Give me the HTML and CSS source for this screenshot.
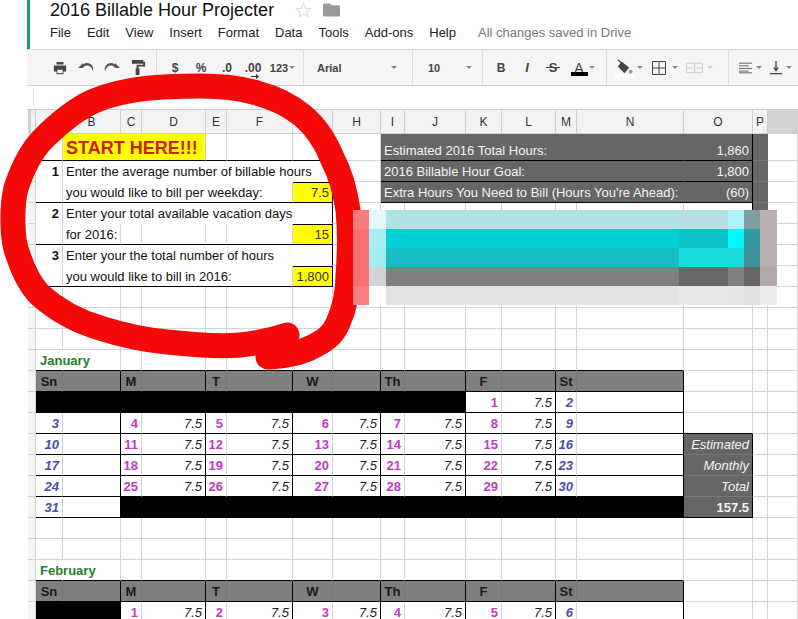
FILE: index.html
```html
<!DOCTYPE html>
<html lang="en">
<head>
<meta charset="utf-8">
<title>2016 Billable Hour Projecter</title>
<link rel="stylesheet" href="styles.css">
</head>
<body>
<div class="page">
  <header class="docbar">
    <div class="titlerow">
      <h1 class="doctitle">2016 Billable Hour Projecter</h1>
      <svg class="star" viewBox="0 0 18 18"><path d="M9 1.500l2.200 5 5.300.5-4 3.600 1.200 5.300L9 13.100 4.300 15.900l1.200-5.300-4-3.600 5.300-.5z" fill="none" stroke="#ddd" stroke-width="1.200"/></svg>
      <svg class="folder" viewBox="0 0 18 14"><path d="M0 1.500C0 .7.700 0 1.500 0H7l2 2h7.500c.8 0 1.500.7 1.500 1.500v9c0 .8-.7 1.500-1.500 1.500h-15C.7 14 0 13.300 0 12.500z" fill="#999"/></svg>
    </div>
    <nav class="menu">
      <span>File</span><span>Edit</span><span>View</span><span>Insert</span><span>Format</span><span>Data</span><span>Tools</span><span>Add-ons</span><span>Help</span><span class="saved">All changes saved in Drive</span>
    </nav>
  </header>

  <div class="toolbar">
    <div class="tgroup g1">
      <span class="tb"><svg viewBox="0 0 16 16" class="ic"><path d="M4 1h8v3H4zM1 5h14v7h-3v3H4v-3H1zM5 10v4h6v-4z" fill="#444" fill-rule="evenodd"/></svg></span>
      <span class="tb"><svg viewBox="0 0 16 12" class="ic wide"><path d="M5 1L0 6h5c0-1 2-2.500 4-2.500 2.500 0 4.500 1.500 6 5.500 1-4-1.500-8-6-8-1.500 0-3 .5-4 1.500z" fill="#555"/></svg></span>
      <span class="tb"><svg viewBox="0 0 16 12" class="ic wide"><path d="M11 1l5 5h-5c0-1-2-2.500-4-2.500C4.500 3.500 2.500 5 1 9 0 5 2.500 1 7 1c1.500 0 3 .5 4 1.500z" fill="#555"/></svg></span>
      <span class="tb"><svg viewBox="0 0 16 18" class="ic big"><path d="M1 1h12v4H1zM13 3h2v5H8v2H9v7H5v-7h1V6h7z" fill="#444"/></svg></span>
    </div>
    <div class="tgroup g2">
      <span class="tb">$</span><span class="tb">%</span>
      <span class="tb">.0<svg class="arrow" viewBox="0 0 8 5"><path d="M8 2H3V0L0 2.500 3 5V3h5z" fill="#333"/></svg></span>
      <span class="tb">.00<svg class="arrow" viewBox="0 0 8 5"><path d="M0 2H5V0L8 2.500 5 5V3H0z" fill="#333"/></svg></span>
      <span class="tb num">123</span><i class="caret"></i>
    </div>
    <div class="tgroup g3"><span class="tlabel">Arial</span><i class="caret"></i></div>
    <div class="tgroup g4"><span class="tlabel">10</span><i class="caret"></i></div>
    <div class="tgroup g5">
      <span class="tb">B</span><span class="tb it">I</span>
      <span class="tb strike">S</span>
      <span class="tb colora">A</span><i class="caret"></i>
    </div>
    <div class="tgroup g6">
      <span class="tb"><svg viewBox="0 0 18 18" class="ic big"><path d="M6 3l8 6-5 6-7-7z" fill="#444"/><path d="M2 1l6 5" stroke="#444" stroke-width="1.400" fill="none"/><circle cx="15.500" cy="13.500" r="2" fill="#999"/></svg><b class="fillbar"></b></span><i class="caret"></i>
      <span class="tb"><svg viewBox="0 0 14 14" class="ic"><path d="M.5.500h13v13H.5zM7 .5v13M.5 7h13" fill="none" stroke="#444"/></svg></span><i class="caret"></i>
      <span class="tb"><svg viewBox="0 0 18 14" class="ic big"><path d="M.5 2.500h17v10H.5zM9 2.500v10M.5 7.500H7M11 7.500h6.500" fill="none" stroke="#ccc"/></svg></span><i class="caret pale"></i>
    </div>
    <div class="tgroup g7">
      <span class="tb"><svg viewBox="0 0 16 12" class="ic"><path d="M0 .5h15M0 3.500h11M0 6.500h15M0 9.500h11M0 11.500h15" fill="none" stroke="#555"/></svg></span><i class="caret"></i>
      <span class="tb"><svg viewBox="0 0 16 16" class="ic"><path d="M8 0v10M5.500 7.500L8 11l2.500-3.500M1 14.500h14" fill="none" stroke="#444" stroke-width="1.500"/></svg></span><i class="caret"></i>
    </div>
  </div>

  <div class="formula"><i class="fxline"></i></div>

  <table class="sheet">
    <colgroup>
      <col class="c-rh"><col class="c-a"><col class="c-b"><col class="c-c"><col class="c-d"><col class="c-e"><col class="c-f"><col class="c-g"><col class="c-h"><col class="c-i"><col class="c-j"><col class="c-k"><col class="c-l"><col class="c-m"><col class="c-n"><col class="c-o"><col class="c-p"><col class="c-q">
    </colgroup>
    <thead>
      <tr class="heads"><th class="rh handle"></th><th>A</th><th>B</th><th>C</th><th>D</th><th>E</th><th>F</th><th>G</th><th>H</th><th>I</th><th>J</th><th>K</th><th>L</th><th>M</th><th>N</th><th>O</th><th>P</th><th class="qhead"></th></tr>
    </thead>
    <tbody>
      <tr class="tall"><th class="rh"></th><td class="bb"></td><td colspan="3" class="start bb">START HERE!!!</td><td class="bb"></td><td class="bb"></td><td class="bb"></td><td></td><td colspan="6" class="dk bb text">Estimated 2016 Total Hours:</td><td class="dk bb br num">1,860</td><td class="dk"></td><td></td></tr>
      <tr><th class="rh"></th><td class="step nob">1</td><td colspan="6" class="text nob">Enter the average number of billable hours</td><td class="bl"></td><td colspan="6" class="dk bb text">2016 Billable Hour Goal:</td><td class="dk bb br num">1,800</td><td class="dk"></td><td></td></tr>
      <tr><th class="rh"></th><td class="bb"></td><td colspan="5" class="text bb">you would like to bill per weekday:</td><td class="yel bb br num">7.5</td><td></td><td colspan="6" class="dk bb text">Extra Hours You Need to Bill (Hours You're Ahead):</td><td class="dk bb br num">(60)</td><td class="dk"></td><td></td></tr>
      <tr><th class="rh"></th><td class="step nob">2</td><td colspan="6" class="text nob br">Enter your total available vacation days</td><td></td><td></td><td></td><td></td><td></td><td></td><td></td><td class="br"></td><td class="dk"></td><td></td></tr>
      <tr><th class="rh"></th><td class="bb"></td><td class="text bb">for 2016:</td><td class="bb"></td><td class="bb"></td><td class="bb"></td><td class="bb"></td><td class="yel bb br num">15</td><td></td><td></td><td></td><td></td><td></td><td></td><td></td><td></td><td></td><td></td></tr>
      <tr><th class="rh"></th><td class="step nob">3</td><td colspan="6" class="text nob br">Enter your the total number of hours</td><td></td><td></td><td></td><td></td><td></td><td></td><td></td><td></td><td></td><td></td></tr>
      <tr><th class="rh"></th><td class="bb"></td><td colspan="5" class="text bb">you would like to bill in 2016:</td><td class="yel bb br num">1,800</td><td></td><td></td><td></td><td></td><td></td><td></td><td></td><td></td><td></td><td></td></tr>
      <tr><th class="rh"></th><td></td><td></td><td></td><td></td><td></td><td></td><td></td><td></td><td></td><td></td><td></td><td></td><td></td><td></td><td></td><td></td><td></td></tr>
      <tr><th class="rh"></th><td></td><td></td><td></td><td></td><td></td><td></td><td></td><td></td><td></td><td></td><td></td><td></td><td></td><td></td><td></td><td></td><td></td></tr>
      <tr><th class="rh"></th><td></td><td></td><td></td><td></td><td></td><td></td><td></td><td></td><td></td><td></td><td></td><td></td><td></td><td></td><td></td><td></td><td></td></tr>

      <tr class="top"><th class="rh"></th><td class="month">January</td><td></td><td></td><td></td><td></td><td></td><td></td><td></td><td></td><td></td><td></td><td></td><td></td><td></td><td></td><td></td><td></td></tr>
      <tr class="cal calh"><th class="rh"></th><td>Sn</td><td></td><td>M</td><td></td><td>T</td><td></td><td>W</td><td></td><td>Th</td><td></td><td>F</td><td></td><td>St</td><td></td><td></td><td></td><td></td></tr>
      <tr class="cal"><th class="rh"></th><td class="k"></td><td class="k"></td><td class="k"></td><td class="k"></td><td class="k"></td><td class="k"></td><td class="k"></td><td class="k"></td><td class="k"></td><td class="k"></td><td class="wd">1</td><td class="hr">7.5</td><td class="we">2</td><td></td><td></td><td></td><td></td></tr>
      <tr class="cal topo"><th class="rh"></th><td class="we">3</td><td></td><td class="wd">4</td><td class="hr">7.5</td><td class="wd">5</td><td class="hr">7.5</td><td class="wd">6</td><td class="hr">7.5</td><td class="wd">7</td><td class="hr">7.5</td><td class="wd">8</td><td class="hr">7.5</td><td class="we">9</td><td></td><td class="dkb bbk"></td><td></td><td></td></tr>
      <tr class="cal"><th class="rh"></th><td class="we">10</td><td></td><td class="wd">11</td><td class="hr">7.5</td><td class="wd">12</td><td class="hr">7.5</td><td class="wd">13</td><td class="hr">7.5</td><td class="wd">14</td><td class="hr">7.5</td><td class="wd">15</td><td class="hr">7.5</td><td class="we">16</td><td></td><td class="dk sum">Estimated</td><td></td><td></td></tr>
      <tr class="cal"><th class="rh"></th><td class="we">17</td><td></td><td class="wd">18</td><td class="hr">7.5</td><td class="wd">19</td><td class="hr">7.5</td><td class="wd">20</td><td class="hr">7.5</td><td class="wd">21</td><td class="hr">7.5</td><td class="wd">22</td><td class="hr">7.5</td><td class="we">23</td><td></td><td class="dk sum">Monthly</td><td></td><td></td></tr>
      <tr class="cal"><th class="rh"></th><td class="we">24</td><td></td><td class="wd">25</td><td class="hr">7.5</td><td class="wd">26</td><td class="hr">7.5</td><td class="wd">27</td><td class="hr">7.5</td><td class="wd">28</td><td class="hr">7.5</td><td class="wd">29</td><td class="hr">7.5</td><td class="we">30</td><td></td><td class="dk sum">Total</td><td></td><td></td></tr>
      <tr class="cal"><th class="rh"></th><td class="we">31</td><td></td><td class="k"></td><td class="k"></td><td class="k"></td><td class="k"></td><td class="k"></td><td class="k"></td><td class="k"></td><td class="k"></td><td class="k"></td><td class="k"></td><td class="k"></td><td class="k"></td><td class="dk total">157.5</td><td></td><td></td></tr>
      <tr><th class="rh"></th><td></td><td></td><td></td><td></td><td></td><td></td><td></td><td></td><td></td><td></td><td></td><td></td><td></td><td></td><td></td><td></td><td></td></tr>
      <tr><th class="rh"></th><td></td><td></td><td></td><td></td><td></td><td></td><td></td><td></td><td></td><td></td><td></td><td></td><td></td><td></td><td></td><td></td><td></td></tr>

      <tr class="top"><th class="rh"></th><td class="month">February</td><td></td><td></td><td></td><td></td><td></td><td></td><td></td><td></td><td></td><td></td><td></td><td></td><td></td><td></td><td></td><td></td></tr>
      <tr class="cal calh"><th class="rh"></th><td>Sn</td><td></td><td>M</td><td></td><td>T</td><td></td><td>W</td><td></td><td>Th</td><td></td><td>F</td><td></td><td>St</td><td></td><td></td><td></td><td></td></tr>
      <tr class="cal"><th class="rh"></th><td class="k"></td><td class="k"></td><td class="wd">1</td><td class="hr">7.5</td><td class="wd">2</td><td class="hr">7.5</td><td class="wd">3</td><td class="hr">7.5</td><td class="wd">4</td><td class="hr">7.5</td><td class="wd">5</td><td class="hr">7.5</td><td class="we">6</td><td></td><td></td><td></td><td></td></tr>
    </tbody>
  </table>

  <svg class="scribble" viewBox="0 0 798 619">
    <path d="M268 357C285 356 300 353 310 348C325 341 333 335 338 323C346 305 348 290 348 275C350 250 350 230 348 210C345 190 341 175 333 160C325 140 315 126 303 116C290 105 272 97 257 93C240 88 220 86 200 86C162 86 124 88 94 101C78 108 60 122 43 139C32 150 22 170 16 188C12 205 11 238 18 255C23 270 30 285 40 295C60 313 80 322 100 328C125 336 145 340 167 342C195 345 218 347 240 345C260 343 275 339 287 335" fill="none" stroke="#f40808" stroke-width="25" stroke-linecap="round" stroke-linejoin="round"/>
  </svg>

  <div class="mosaic">
    <div class="mrow r1"><i class="m0"></i><i class="m1"></i><i class="m2"></i><i class="m3"></i><i class="m4"></i><i class="m5"></i><i class="m6"></i></div>
    <div class="mrow r2"><i class="m0"></i><i class="m1"></i><i class="m2"></i><i class="m3"></i><i class="m4"></i><i class="m5"></i><i class="m6"></i></div>
    <div class="mrow r3"><i class="m0"></i><i class="m1"></i><i class="m2"></i><i class="m3"></i><i class="m4"></i><i class="m5"></i><i class="m6"></i></div>
    <div class="mrow r4"><i class="m0"></i><i class="m1"></i><i class="m2"></i><i class="m3"></i><i class="m4"></i><i class="m5"></i><i class="m6"></i></div>
    <div class="mrow r5"><i class="m0"></i><i class="m1"></i><i class="m2"></i><i class="m3"></i><i class="m4"></i><i class="m5"></i><i class="m6"></i></div>
  </div>
</div>
</body>
</html>
```

FILE: styles.css
```css
* { box-sizing: border-box; }
html, body { margin: 0; padding: 0; background: #fff; }
body { font-family: "Liberation Sans", Arial, sans-serif; color: #111; }
.page { position: relative; width: 798px; height: 619px; overflow: hidden; }

.docbar { margin-left: 27px; height: 49px; border-left: 3px solid #1d9d76; padding-left: 20px; }
.titlerow { display: flex; align-items: center; height: 20px; }
.doctitle { margin: 0; font-size: 18px; font-weight: 400; line-height: 20px; color: #111; white-space: nowrap; }
.star { width: 17px; height: 17px; margin-left: 21px; }
.folder { width: 17px; height: 14px; margin-left: 11px; }
.menu { display: flex; gap: 16px; font-size: 13px; line-height: 16px; margin-top: 5px; color: #222; white-space: nowrap; }
.saved { color: #777; margin-left: 6px; }

.toolbar { display: flex; margin-left: 27px; height: 37px; background: #f5f5f5; border-top: 1px solid #dcdcdc; border-bottom: 1px solid #d4d4d4; font-size: 12px; font-weight: 700; color: #444; overflow: hidden; }
.tgroup { display: flex; align-items: center; height: 100%; border-right: 1px solid #dcdcdc; flex: none; }
.g1 { width: 130px; padding-left: 20px; }
.g2 { width: 147px; padding-left: 5px; }
.g3 { width: 109px; padding-left: 13px; justify-content: space-between; padding-right: 14px; }
.g4 { width: 70px; padding-left: 15px; justify-content: space-between; padding-right: 9px; }
.g5 { width: 124px; padding-left: 5px; }
.g6 { width: 122px; padding-left: 4px; }
.g7 { width: 90px; padding-left: 4px; border-right: 0; }
.tb { position: relative; display: flex; align-items: center; justify-content: center; width: 26px; height: 100%; flex: none; font-size: 12px; }
.tlabel { font-size: 11px; }
.ic { width: 14px; height: 14px; }
.ic.wide { width: 16px; height: 12px; }
.ic.big { width: 17px; height: 17px; }
.arrow { position: absolute; left: 11px; top: 24px; width: 8px; height: 5px; }
.num { font-size: 11px; }
.it { font-style: italic; font-size: 13px; }
.strike { font-size: 13px; }
.strike::after { content: ""; position: absolute; left: 6px; right: 6px; top: 17px; height: 1px; background: #444; }
.colora { font-weight: 400; font-size: 14px; }
.colora::after { content: ""; position: absolute; left: 5px; right: 4px; bottom: 9px; height: 4px; background: #000; }
.fillbar { position: absolute; left: 4px; right: 3px; bottom: 7px; height: 4px; background: #fff; }
.caret { display: block; flex: none; width: 0; height: 0; border-left: 3px solid transparent; border-right: 3px solid transparent; border-top: 3px solid #888; margin-left: -3px; margin-right: 1px; }
.caret.pale { border-top-color: #ccc; }
.g6 .caret { margin-left: 0; margin-right: 3px; }

.formula { margin-left: 27px; height: 24px; background: #fff; border-bottom: 1px solid #ccc; padding: 2px 0 0 6px; }
.fxline { display: block; width: 1px; height: 17px; background: #ddd; }

.sheet { margin-left: 28px; table-layout: fixed; width: 770px; border-collapse: separate; border-spacing: 0; font-size: 13px; line-height: 14px; }
.c-rh { width: 8px; } .c-a { width: 27px; } .c-b { width: 58px; } .c-c { width: 21px; } .c-d { width: 64px; } .c-e { width: 21px; } .c-f { width: 66px; } .c-g { width: 40px; } .c-h { width: 48px; } .c-i { width: 24px; } .c-j { width: 61px; } .c-k { width: 36px; } .c-l { width: 54px; } .c-m { width: 21px; } .c-n { width: 107px; } .c-o { width: 69px; } .c-p { width: 15px; } .c-q { width: 30px; }
.sheet tr { height: 21px; }
.sheet tr.tall { height: 27px; }
.sheet td, .sheet th { padding: 0; border-right: 1px solid #d4d4d4; border-bottom: 1px solid #d4d4d4; white-space: nowrap; overflow: visible; }
.sheet td { vertical-align: bottom; padding-bottom: 2px; height: 21px; }
.heads { height: 24px; }
.sheet .heads th { height: 24px; background: #f3f3f3; font-weight: 400; font-size: 12px; color: #333; border-color: #d0d0d0; }
.sheet .heads .qhead { background: #d2d2d2; border-right: 0; }
.sheet .rh { background: #f5f5f5; width: 8px; }
.sheet .handle { background: #bbb; border-left: 3px solid #f3f3f3; border-bottom-color: #bbb; }

.sheet .bb { border-bottom-color: #000; }
.sheet .br { border-right-color: #000; }
.sheet .nob { border-bottom-color: #fff; }
.sheet .text { padding-left: 3px; }
.sheet .num { text-align: right; padding-right: 3px; font-size: 13px; }
.sheet .step { font-weight: 700; text-align: right; padding-right: 3px; }
.sheet .start { background: #ffff00; color: #cc1f0d; font-weight: 700; font-size: 18px; padding-left: 3px; padding-bottom: 5px; }
.sheet .yel { background: #ffff00; border-top: 1px solid #000; color: #333; }
.sheet .dk { background: #666; color: #f4f4f4; border-right-color: #666; border-bottom-color: #777; }
.sheet .dk.bb { border-bottom-color: #000; }
.sheet .dk.br { border-right-color: #000; }

.month { color: #1e7f2a; font-weight: 700; }
.sheet .month { border-right-color: #fff; padding-left: 4px; }
.sheet tr.top > td:nth-child(-n+15) { border-bottom-color: #000; }
.sheet tr.cal > td:nth-child(-n+15) { border-bottom-color: #000; }
.sheet tr.cal > td:nth-child(odd):nth-child(-n+15) { border-right-color: #000; }
.sheet tr.calh > td:nth-child(-n+15) { background: #7f7f7f; font-weight: 700; text-align: center; color: #1a1a1a; }
.sheet tr.calh > td:nth-child(even):nth-child(-n+15) { border-right-color: #777; }
.sheet tr.cal > td.k { background: #000; border-color: #000; }
.sheet tr.cal > td.we { color: #4c4cb0; font-weight: 700; font-style: italic; text-align: right; padding-right: 3px; }
.sheet tr.cal > td.wd { color: #c637c6; font-weight: 700; text-align: right; padding-right: 3px; }
.sheet tr.cal > td.hr { font-style: italic; text-align: right; padding-right: 3px; color: #222; }
.sheet tr.topo > td.dkb { border-bottom-color: #000; }
.sheet tr.cal > td.sum { font-style: italic; text-align: right; padding-right: 3px; border-right-color: #000; }
.sheet tr.cal > td.total { font-weight: 700; text-align: right; padding-right: 3px; border-right-color: #000; border-bottom-color: #000; }

.scribble { position: absolute; left: 0; top: 0; width: 798px; height: 619px; pointer-events: none; }

.mosaic { position: absolute; left: 353px; top: 210px; width: 424px; display: flex; flex-direction: column; }
.mrow { display: flex; height: 19px; }
.mrow i { display: block; flex: none; }
.m0 { width: 16px; } .m1 { width: 17px; } .m2 { width: 293px; } .m3 { width: 49px; } .m4 { width: 16px; } .m5 { width: 16px; } .m6 { width: 17px; }
.r1 .m0 { background: #f87a7a; } .r1 .m1 { background: #e2f8f8; } .r1 .m2 { background: #b0e4e4; } .r1 .m3 { background: #b4e0e2; } .r1 .m4 { background: #a8f4f8; } .r1 .m5 { background: #7e9ea0; } .r1 .m6 { background: #b8b0b0; }
.r2 .m0 { background: #f87070; } .r2 .m1 { background: #a8eef0; } .r2 .m2 { background: #00d0d4; } .r2 .m3 { background: #08c4c8; } .r2 .m4 { background: #00f8fa; } .r2 .m5 { background: #2f9a9f; } .r2 .m6 { background: #b8b0b0; }
.r3 .m0 { background: #f87070; } .r3 .m1 { background: #a0eef0; } .r3 .m2 { background: #18bcc4; } .r3 .m3 { background: #18dce0; } .r3 .m4 { background: #18dce0; } .r3 .m5 { background: #3f8f98; } .r3 .m6 { background: #b8b0b0; }
.r4 .m0 { background: #f87070; } .r4 .m1 { background: #d0d4d4; } .r4 .m2 { background: #808080; } .r4 .m3 { background: #686868; } .r4 .m4 { background: #808080; } .r4 .m5 { background: #666; } .r4 .m6 { background: #b0aaaa; }
.r5 .m0 { background: #f88080; } .r5 .m1 { background: #fff; } .r5 .m2 { background: #e4e2e2; } .r5 .m3 { background: #e8e6e6; } .r5 .m4 { background: #e6e4e4; } .r5 .m5 { background: #e0dede; } .r5 .m6 { background: #eee; }
```
